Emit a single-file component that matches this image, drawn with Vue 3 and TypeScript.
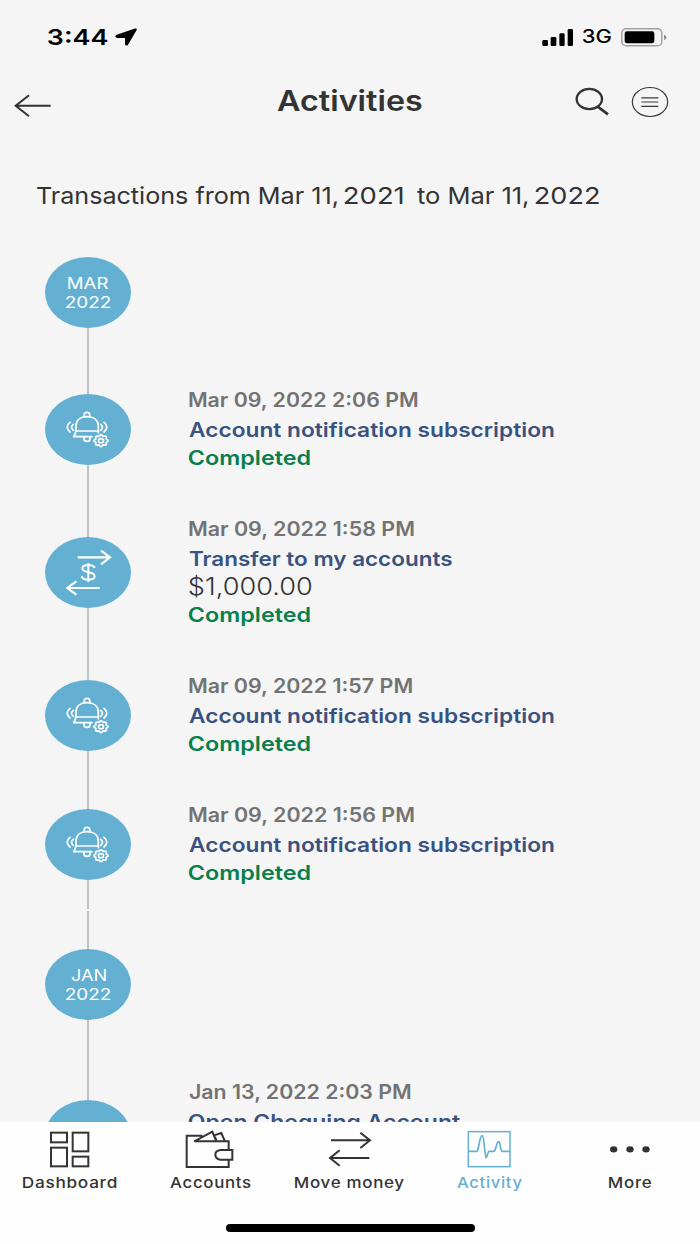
<script setup lang="ts">
import type { Directive } from 'vue'

type Kind = 'bell' | 'transfer' | 'none'

interface Activity {
  kind: Kind
  date: string
  dateWidth: number
  title: string
  titleWidth: number
  amount?: string
  status?: string
}

interface Month {
  name: string
  nameWidth: number
  year: string
  items: Activity[]
}

const months: Month[] = [
  {
    name: 'MAR',
    nameWidth: 40,
    year: '2022',
    items: [
      { kind: 'bell', date: 'Mar 09, 2022 2:06 PM', dateWidth: 229, title: 'Account notification subscription', titleWidth: 364.5, status: 'Completed' },
      { kind: 'transfer', date: 'Mar 09, 2022 1:58 PM', dateWidth: 225.3, title: 'Transfer to my accounts', titleWidth: 263.5, amount: '$1,000.00', status: 'Completed' },
      { kind: 'bell', date: 'Mar 09, 2022 1:57 PM', dateWidth: 223.5, title: 'Account notification subscription', titleWidth: 364.5, status: 'Completed' },
      { kind: 'bell', date: 'Mar 09, 2022 1:56 PM', dateWidth: 225.3, title: 'Account notification subscription', titleWidth: 364.5, status: 'Completed' },
    ],
  },
  {
    name: 'JAN',
    nameWidth: 35,
    year: '2022',
    items: [
      { kind: 'none', date: 'Jan 13, 2022 2:03 PM', dateWidth: 222, title: 'Open Chequing Account', titleWidth: 271 },
    ],
  },
]

const tabs = [
  { id: 'dashboard', label: 'Dashboard', width: 94, box: '135 180 150 117' },
  { id: 'accounts', label: 'Accounts', width: 81, box: '555 180 150 117' },
  { id: 'move', label: 'Move money', width: 109.5, box: '975 180 150 117' },
  { id: 'activity', label: 'Activity', width: 65.5, box: '1395 180 150 117' },
  { id: 'more', label: 'More', width: 43, box: '1815 180 150 117' },
]

// Widens a line of text so that its visible ink spans the given width.
const ctx = document.createElement('canvas').getContext('2d')!
const vFit: Directive<HTMLElement, number> = {
  mounted(el, { value }) {
    const cs = getComputedStyle(el)
    ctx.font = `${cs.fontWeight} ${cs.fontSize} ${cs.fontFamily}`
    const spacing = parseFloat(cs.letterSpacing) || 0
    const text = el.textContent ?? ''
    const m = ctx.measureText(text)
    const ink = m.actualBoundingBoxLeft + m.actualBoundingBoxRight + spacing * (text.length - 1)
    el.style.width = `${ink}px`
    el.style.marginRight = `${value - ink}px`
    el.style.transform = `scaleX(${value / ink}) translateX(${m.actualBoundingBoxLeft}px)`
  },
}

const gear = (() => {
  const pts: string[] = []
  for (let i = 0; i <= 64; i++) {
    const a = (i / 64) * Math.PI * 2
    const r = 19 + 2.4 * Math.cos(a * 8)
    pts.push(`${(213 + r * Math.cos(a)).toFixed(1)} ${(602 + r * 0.84 * Math.sin(a)).toFixed(1)}`)
  }
  return `M${pts.join('L')}Z`
})()
</script>

<template>
  <div class="screen">
    <div class="status">
      <span v-fit="59.5" class="fit clock">3:44</span>
      <svg class="loc" width="22" height="18" viewBox="346 84 66 54">
        <path d="M406 85.500Q413 84 411 90L385 134Q382 138 378 136Q376 135 376 131V114H352Q347 113 347 109Q347 106 351 104.500Z" fill="#000" />
      </svg>
      <svg class="bars" width="32" height="17" viewBox="576 84 96 51">
        <rect x="577" y="117" width="17" height="18" rx="4" />
        <rect x="602" y="108" width="17" height="27" rx="4" />
        <rect x="628" y="97" width="16" height="38" rx="4" />
        <rect x="653" y="84" width="16" height="51" rx="4" />
      </svg>
      <span v-fit="28.4" class="fit net">3G</span>
      <svg class="battery" width="46" height="19" viewBox="815 82 138 57">
        <rect x="817.5" y="84.500" width="120" height="51" rx="13" fill="none" stroke="#a0a0a0" stroke-width="4.5" />
        <rect x="826" y="92" width="89" height="36" rx="7" fill="#000" />
        <path d="M944 102Q951 104 951 110Q951 116 944 118Z" fill="#8c8c8c" />
      </svg>
    </div>

    <header class="header">
      <svg class="back" width="38" height="24" viewBox="42 282 114 72" fill="none" stroke="#333" stroke-width="6">
        <path d="M46 317.500H152M87 286L47 317.500L87 349" />
      </svg>
      <h1 v-fit="145" class="fit title">Activities</h1>
      <svg class="search" width="36" height="30" viewBox="675 262 108 90" fill="none" stroke="#333">
        <ellipse cx="718" cy="298" rx="38" ry="30.500" stroke-width="7" />
        <path d="M743 321L774 344" stroke-width="8" />
      </svg>
      <svg class="menu" width="38" height="32" viewBox="842 258 114 96" fill="none" stroke="#3a3a3a">
        <ellipse cx="899" cy="306" rx="53" ry="43.500" stroke-width="3.500" />
        <path d="M873 293.500H924M873 306H924M873 319H924" stroke-width="3.500" />
      </svg>
    </header>

    <p class="range">
      <span v-fit="300" class="fit">Transactions from Mar 11,</span>
      <span v-fit="59" class="fit year">2021</span>
      <span v-fit="110.5" class="fit to">to Mar 11,</span>
      <span v-fit="64" class="fit year">2022</span>
    </p>

    <main class="timeline">
      <section v-for="month in months" :key="month.name" class="month">
        <div class="disc badge">
          <span v-fit="month.nameWidth" class="fit badge-text">{{ month.name }}</span>
          <span v-fit="44.5" class="fit badge-text">{{ month.year }}</span>
        </div>
        <article v-for="item in month.items" :key="item.date" class="row" :class="{ tall: item.kind === 'none' }">
          <div class="disc">
            <svg v-if="item.kind === 'bell'" width="86" height="71" viewBox="45 462 258 213" fill="none" stroke="#fff" stroke-width="5.200" stroke-linejoin="round" stroke-linecap="round">
              <path d="M163 529V523Q163 517 171 517Q179 517 179 523V529" />
              <path d="M138 573V558C138 540 151 530 171 530S205 540 205 558V578" />
              <path d="M138 573H203M138 573Q136 582 131 590H186" />
              <path d="M162 592V597Q162 604 171 604Q180 604 180 597V592" />
              <path d="M120 547Q103 561 120 576M130 553Q119 562 130 571M212 553Q223 562 212 571M222 547Q239 561 222 576" />
              <path :d="gear" stroke-width="5" />
              <ellipse cx="213" cy="602" rx="7.500" ry="6.200" stroke-width="4.800" />
            </svg>
            <svg v-else-if="item.kind === 'transfer'" width="86" height="71" viewBox="45 51 258 213" fill="none" stroke="#fff" stroke-width="6.500">
              <path d="M143 112H239M213 92L240 112L213 133M209 204H113M139 184L112 204L139 224" />
              <path d="M194 144Q191 135 175 135Q157 135 157 145Q157 153 175 157Q194 160 194 169Q194 179 175 179Q157 179 155 168M175 129V186" stroke-width="6" />
            </svg>
          </div>
          <div class="text">
            <div v-fit="item.dateWidth" class="fit date">{{ item.date }}</div>
            <div v-fit="item.titleWidth" class="fit name">{{ item.title }}</div>
            <div v-if="item.amount" v-fit="122" class="fit amount">{{ item.amount }}</div>
            <div v-if="item.status" v-fit="121.5" class="fit done">{{ item.status }}</div>
          </div>
        </article>
      </section>
    </main>

    <nav class="tabs">
      <div v-for="tab in tabs" :key="tab.id" class="tab" :class="{ active: tab.id === 'activity' }">
        <svg width="50" height="39" :viewBox="tab.box" fill="none" stroke="currentColor" stroke-width="6">
          <g v-if="tab.id === 'dashboard'">
            <rect x="153" y="188" width="48" height="29" />
            <rect x="218" y="188" width="47" height="56" />
            <rect x="153" y="233" width="48" height="56" />
            <rect x="218" y="260" width="47" height="29" />
          </g>
          <g v-else-if="tab.id === 'accounts'">
            <path d="M607 197H560V291H686V270M686 240V214H583L637 185L648 212M642 196L664 189L674 212M649 211L645 201" />
            <path d="M697 240H661Q646 242 646 254.500Q646 267 661 269H697Z" />
          </g>
          <path v-else-if="tab.id === 'move'" d="M993 211H1110M1081 188L1110 211L1081 234M1108 264H990M1019 241L990 264L1019 287" />
          <g v-else-if="tab.id === 'activity'" stroke-width="4.500">
            <rect x="1405" y="185" width="125" height="105" />
            <path d="M1405 244H1431C1437 237 1439 197 1446 197C1453 197 1451 231 1458 263C1463 262 1462 247 1467 244H1482C1489 240 1489 215 1496 215C1502 215 1499 235 1506 244H1530" stroke-width="5" />
          </g>
          <g v-else fill="currentColor" stroke="none">
            <ellipse cx="1841" cy="238" rx="11" ry="9.500" />
            <ellipse cx="1890" cy="238" rx="11" ry="9.500" />
            <ellipse cx="1938" cy="238" rx="11" ry="9.500" />
          </g>
        </svg>
        <span v-fit="tab.width" class="fit label">{{ tab.label }}</span>
      </div>
      <div class="home"></div>
    </nav>
  </div>
</template>

<style>
html,
body {
  margin: 0;
  background: #f5f5f5;
}
</style>

<style scoped>
.screen {
  width: 700px;
  height: 1244px;
  display: flex;
  flex-direction: column;
  overflow: hidden;
  background: #f5f5f5;
  color: #333;
  font-family: Inter, "Liberation Sans", sans-serif;
}
.fit {
  display: block;
  flex: none;
  white-space: nowrap;
  transform-origin: 0 0;
}
.status {
  box-sizing: border-box;
  height: 74px;
  padding: 0 33px 0 48px;
  display: flex;
  align-items: center;
  color: #000;
}
.clock {
  font-size: 22px;
  font-weight: 600;
  line-height: 24px;
}
.loc {
  margin-left: 8px;
}
.bars {
  margin-left: auto;
}
.net {
  margin-left: 8.500px;
  font-size: 18px;
  font-weight: 500;
  line-height: 20px;
}
.battery {
  margin-left: 10px;
}
.header {
  display: flex;
  align-items: center;
  height: 60px;
  padding-left: 14px;
}
.back {
  margin-top: 4px;
}
.title {
  margin: -6px 0 0 225px;
  font-size: 28.500px;
  font-weight: 600;
  line-height: 34px;
}
.search {
  margin-left: 153.500px;
  margin-top: -5px;
}
.menu {
  margin-left: 19.500px;
  margin-top: -5px;
}
.range {
  display: flex;
  margin: 46px 0 0 37px;
  font-size: 23.400px;
  line-height: 32px;
}
.year {
  margin-left: 7.500px;
}
.to {
  margin-left: 14px;
}
.timeline {
  flex: 1;
  min-height: 0;
  margin-top: 45px;
  padding-left: 45px;
  overflow: hidden;
}
.month {
  position: relative;
  padding-bottom: 23px;
}
.month::before {
  content: "";
  position: absolute;
  top: 10px;
  bottom: 0;
  left: 42.400px;
  width: 2px;
  background: #c2c2c2;
}
.month + .month {
  padding-top: 40px;
}
.month + .month::before {
  top: 2px;
}
.disc {
  position: relative;
  flex: none;
  width: 86px;
  height: 71px;
  border-radius: 50%;
  background: #64b0d2;
}
.disc svg {
  display: block;
}
.badge {
  display: flex;
  flex-direction: column;
  align-items: center;
  justify-content: center;
  margin-bottom: 56px;
  color: #fff;
}
.badge-text {
  font-size: 16px;
  line-height: 19px;
}
.row {
  display: flex;
  align-items: center;
  gap: 58px;
}
.row + .row {
  margin-top: 42px;
}
.row .disc {
  top: 2px;
}
.text {
  position: relative;
  top: 1px;
}
.tall {
  height: 115px;
}
.tall .text {
  align-self: flex-start;
}
.date {
  font-size: 19.500px;
  font-weight: 600;
  line-height: 31px;
  color: #737373;
}
.name {
  font-size: 20px;
  font-weight: 600;
  line-height: 28px;
  color: #3a527f;
}
.amount {
  font-size: 23.500px;
  font-weight: 300;
  line-height: 28px;
}
.done {
  font-size: 20px;
  font-weight: 600;
  line-height: 28px;
  color: #087f4c;
}
.tabs {
  position: relative;
  box-sizing: border-box;
  flex: none;
  height: 122.500px;
  padding-top: 8.500px;
  display: flex;
  background: #fefefe;
}
.tab {
  width: 140px;
  display: flex;
  flex-direction: column;
  align-items: center;
}
.tab.active {
  color: #64b0d2;
}
.label {
  margin-top: 5px;
  font-size: 15px;
  font-weight: 500;
  line-height: 18px;
  letter-spacing: 0.600px;
}
.home {
  position: absolute;
  left: 225.500px;
  bottom: 12px;
  width: 249.500px;
  height: 8px;
  border-radius: 4px;
  background: #000;
}
</style>
